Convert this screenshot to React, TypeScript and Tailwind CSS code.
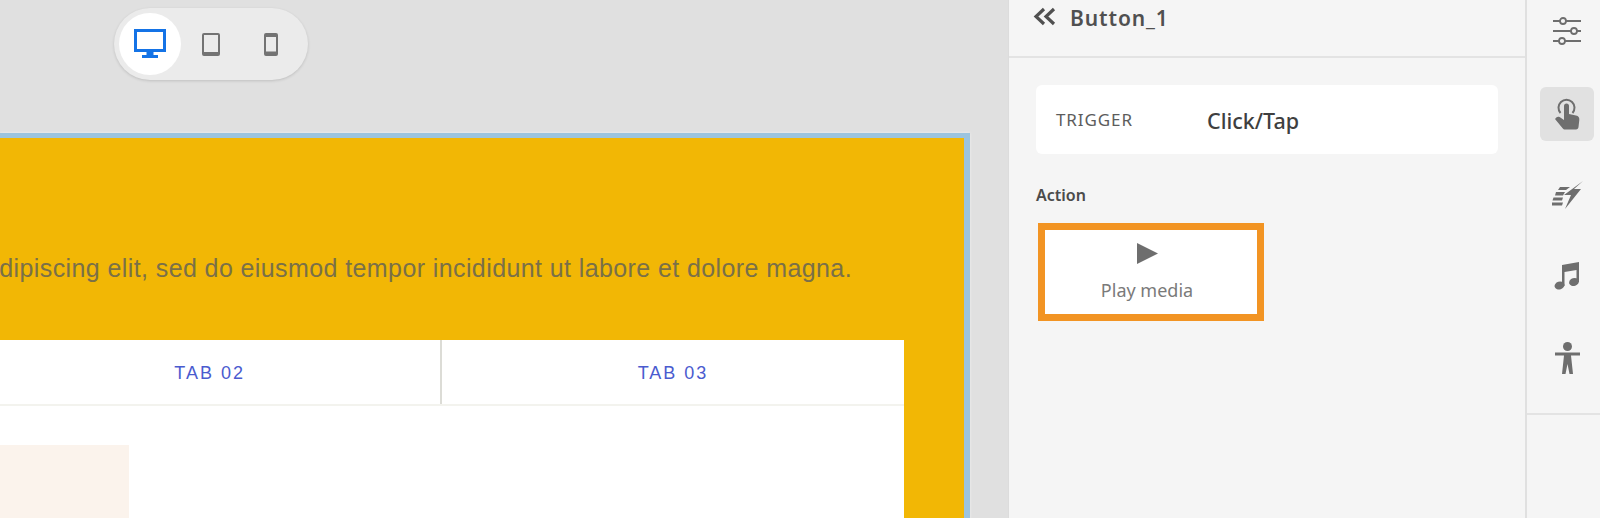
export default function App() {
  return (
    <div className="flex h-[518px] w-[1600px] overflow-hidden bg-[#f5f5f5] font-['Noto_Sans',sans-serif]">
      {/* Canvas */}
      <div className="flex h-full w-[1008px] shrink-0 flex-col bg-[#e0e0e0]">
        <div className="pl-[114px] pt-[8px]">
          <div className="flex h-[72px] w-[194px] items-center rounded-full bg-[#ebebeb] pl-[5px] shadow-[0_1px_3px_rgba(0,0,0,0.15)]">
            <div className="flex h-[62px] w-[62px] items-center justify-center rounded-full bg-white">
              <svg width="32" height="30" viewBox="0 0 32 30">
                <path fill="#1473e6" d="M0 0h32v23H19.500v3H24v3H8v-3h4.500v-3H0z" />
                <rect x="3" y="3" width="26" height="17" fill="#fff" />
              </svg>
            </div>
            <div className="ml-[21px]">
              <svg width="18" height="23" viewBox="0 0 18 23" className="block">
                <rect x="1" y="1" width="16" height="21" rx="1" fill="none" stroke="#737373" strokeWidth="2" />
                <rect x="1" y="19" width="16" height="2" fill="#737373" />
              </svg>
            </div>
            <div className="ml-[44px]">
              <svg width="14" height="23" viewBox="0 0 14 23" className="block">
                <rect x="1" y="1" width="12" height="21" rx="1" fill="none" stroke="#737373" strokeWidth="2" />
                <rect x="1" y="1" width="12" height="3" fill="#737373" />
                <rect x="1" y="18.500" width="12" height="3" fill="#737373" />
              </svg>
            </div>
          </div>
        </div>
        {/* Page being edited */}
        <div className="mt-[53px] flex w-[970px] flex-1 flex-col border-r-[6px] border-t-[5px] border-[#9cc4de] bg-[#f2b705] shadow-[0_0_3px_rgba(255,255,255,0.5)]">
          <div className="flex h-[202px] shrink-0 items-start justify-end overflow-hidden pr-[112px] pt-[117px]">
            <p className="whitespace-nowrap font-['Liberation_Sans',sans-serif] text-[25px] leading-[26px] tracking-[0.4px] text-[#7a7048]">
              dipiscing elit, sed do eiusmod tempor incididunt ut labore et dolore magna.
            </p>
          </div>
          <div className="flex w-[904px] flex-1 flex-col bg-white">
            <div className="flex h-[66px] shrink-0 border-b-2 border-[#f3f3ee] font-['Liberation_Sans',sans-serif] text-[18px] tracking-[2px] text-[#4a5bcf]">
              <div className="flex w-[440px] items-center justify-end pr-[195px] pt-[3px]">TAB 02</div>
              <div className="flex flex-1 items-center justify-center border-l-2 border-[#dcdcd6] pt-[3px]">TAB 03</div>
            </div>
            <div className="pt-[39px]">
              <div className="h-[80px] w-[129px] bg-[#fbf3ec]" />
            </div>
          </div>
        </div>
      </div>

      {/* Properties panel */}
      <div className="h-full w-[519px] shrink-0 border-l border-r-2 border-[#dcdcdc] border-r-[#e0e0e0]">
        <div className="flex h-[58px] items-start border-b-2 border-[#e3e3e3] pl-[24px] pt-[3px]">
          <svg width="23" height="19" viewBox="0 0 23 19" className="mt-[4px]" fill="none" stroke="#505050" strokeWidth="3.200">
            <path d="M11 2 3 9.500l8 7.500M21 2l-8 7.500 8 7.500" />
          </svg>
          <span className="ml-[14px] text-[21px] font-semibold leading-[30px] tracking-[0.9px] text-[#505050]">Button_1</span>
        </div>
        <div className="px-[27px]">
          <div className="mt-[27px] flex h-[69px] w-[462px] items-center rounded-[6px] bg-white pl-[20px]">
            <span className="w-[151px] pt-[1px] text-[17px] tracking-[0.9px] text-[#5c5c5c]">TRIGGER</span>
            <span className="pt-[4px] text-[21.500px] font-medium text-[#3f3f3f]">Click/Tap</span>
          </div>
          <div className="mt-[29px] text-[16px] font-semibold leading-[24px] text-[#4b4b4b]">Action</div>
          <div className="ml-[2px] mt-[16px] flex h-[98px] w-[226px] flex-col items-center border-[7px] border-[#f29423] bg-white pr-[8px] pt-[13px]">
            <svg width="21" height="21" viewBox="0 0 21 21" className="block">
              <path fill="#6e6e6e" d="M0 0l21 10.500L0 21z" />
            </svg>
            <span className="mt-[14px] text-[18px] leading-[24px] text-[#7a7a7a]">Play media</span>
          </div>
        </div>
      </div>

      {/* Right rail */}
      <div className="flex h-full flex-1 flex-col bg-[#f5f5f5]">
        <div className="flex h-[415px] shrink-0 flex-col items-center border-b-2 border-[#e3e3e3] pl-[7px]">
          <div className="flex h-[87px] items-center pb-[25px]">
            <svg width="30" height="28" viewBox="0 0 30 28" fill="none" stroke="#6e6e6e" strokeWidth="1.800">
              <path d="M1 4h7M14 4h15M1 14h18M25 14h4M1 24h6M13 24h16" />
              <circle cx="11" cy="4" r="3" />
              <circle cx="22" cy="14" r="3" />
              <circle cx="10" cy="24" r="3" />
            </svg>
          </div>
          <div className="flex h-[54px] w-[54px] items-center justify-center rounded-[6px] bg-[#e1e1e1]">
            <svg width="26" height="34" viewBox="0 0 26 34">
              <path fill="none" stroke="#6e6e6e" strokeWidth="2" d="M6.500 16a8 8 0 1 1 12 0" />
              <path fill="#6e6e6e" d="M10 9a2.500 2.500 0 0 1 5 0v8l7 1.500c2.500.6 3.500 2 3.300 4.500l-.8 7c-.2 1.500-1 2.500-2.500 2.500H11c-1 0-1.800-.5-2.400-1.300L1 22l1.600-1.700c.8-.8 2-.9 3-.2L10 23z" />
            </svg>
          </div>
          <div className="mt-[38px] flex h-[32px] items-center">
            <svg width="31" height="28" viewBox="0 0 31 28" fill="#6e6e6e">
              <path d="M31 0 12 14h7l-6 14 16-20h-7z" />
              <path d="M8 6h10l-4 3H6zM4 11h9l-2 3.500H3zM1.500 16.500H11l-1 3H0.500zM0 21.500h11l-1 3H0z" />
            </svg>
          </div>
          <div className="mt-[49px] flex h-[32px] items-center">
            <svg width="26" height="28" viewBox="0 0 26 28" fill="#6e6e6e">
              <path d="M8 3 25 0v20h-2.500V8L10.500 10v14H8z" />
              <ellipse cx="5.500" cy="23.500" rx="5" ry="4" transform="rotate(-18 5.500 23.500)" />
              <ellipse cx="20" cy="20" rx="5" ry="4" transform="rotate(-18 20 20)" />
            </svg>
          </div>
          <div className="mt-[50px] flex h-[32px] items-center">
            <svg width="25" height="32" viewBox="0 0 25 32" fill="#6e6e6e">
              <circle cx="12.500" cy="4.500" r="4.500" />
              <path d="M0 10.500h25v3H16l2 18.500h-3.500l-2-10-2 10H7l2-18.500H0z" />
            </svg>
          </div>
        </div>
      </div>
    </div>
  )
}
